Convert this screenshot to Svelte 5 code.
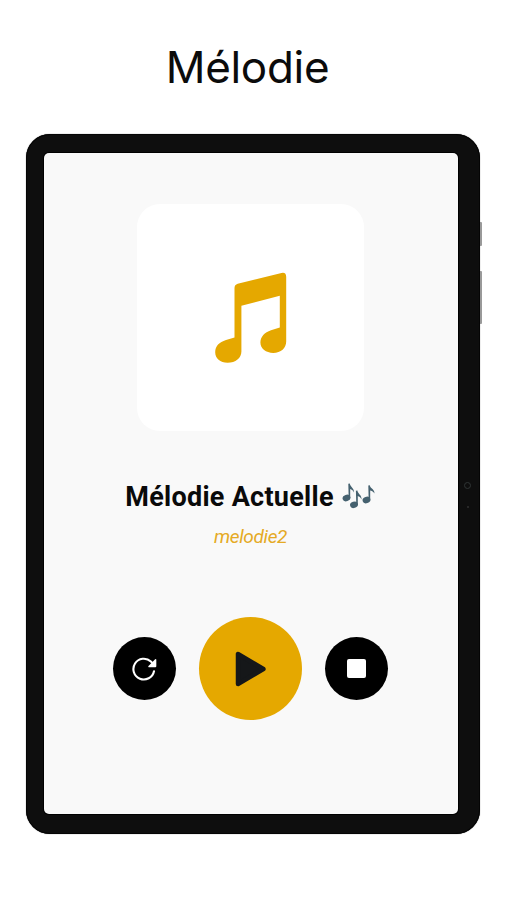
<script lang="ts">
  let track = $state('melodie2');
</script>

<main>
  <h1>Mélodie</h1>

  <div class="tablet">
    <span class="key power"></span>
    <span class="key volume"></span>
    <span class="camera"></span>
    <span class="sensor"></span>

    <section class="screen">
      <div class="cover">
        <svg viewBox="0 0 72 92" width="72" height="92" aria-hidden="true">
          <path
            fill="#e5a800"
            d="M19.5 16Q19.5 12.7 22.7 11.7L66.5.9Q71.2-.2 71.2 5V69.5C71.2 76 66 80.9 58.2 80.9C51 80.9 45.4 76.5 45.4 70.5C45.4 64.5 49.5 60.5 56 58.2L64.8 55.4V23.8L26.4 33.7V79.5C26.4 86 20.6 90.8 12.6 90.8C5.2 90.8.2 86.4.2 80.3C.2 74.2 4.2 70.2 11 68.1L19.5 65.4Z"
          />
        </svg>
      </div>

      <h2>
        <span>Mélodie Actuelle</span>
        <svg viewBox="0 0 34 27" width="34" height="27" aria-hidden="true">
          <g fill="#45616f">
            <ellipse cx="4.5" cy="15" rx="4" ry="3.2" transform="rotate(-18 4.5 15)" />
            <path d="M6.3.8 7.8.4C8.3 4 12.4 4.8 12 9.6 11 7.2 9.4 6.6 8.2 6.1V15H6.7Z" />
            <ellipse cx="12" cy="21.8" rx="4" ry="3.2" transform="rotate(-18 12 21.8)" />
            <path d="M13.9 7.8 15.4 7.4C15.9 11 20 11.8 19.5 16.4 18.6 14.2 17 13.6 15.8 13.1V22H14.3Z" />
            <ellipse cx="24.5" cy="17" rx="4" ry="3.2" transform="rotate(-18 24.5 17)" />
            <path d="M26.3 2.6 27.8 2.2C28.3 5.8 33 6.2 32.4 10.4 31 8.4 29.4 8 28.2 7.6V17H26.7Z" />
          </g>
        </svg>
      </h2>
      <p>{track}</p>

      <div class="controls">
        <button aria-label="Recommencer">
          <svg viewBox="0.7 0 26 26" width="26" height="26">
            <path
              d="M22.7 15.2A10.4 10.4 0 1 1 19.6 5.5L21.4 7.4"
              fill="none"
              stroke="#fff"
              stroke-width="2.1"
              stroke-linecap="round"
            />
            <path d="M25 3.6V10.2Q25 11.2 24 11.2H17.4Q16.5 10.7 17.2 9.9L23.6 3.5Q24.6 2.7 25 3.6Z" fill="#fff" />
          </svg>
        </button>
        <button class="play" aria-label="Lecture">
          <svg viewBox="0 0 32 36" width="32" height="36">
            <path
              d="M3 3V33L28.4 18Z"
              fill="#151719"
              stroke="#151719"
              stroke-width="4.5"
              stroke-linejoin="round"
            />
          </svg>
        </button>
        <button aria-label="Arrêter"><span class="stop"></span></button>
      </div>
    </section>
  </div>
</main>

<style>
  :global(body) {
    background: #fff;
  }

  main {
    box-sizing: border-box;
    height: 900px;
    padding: 40px 26px 0;
    overflow: hidden;
  }

  h1 {
    width: 443px;
    height: 54px;
    margin: 0 0 40px;
    color: #0b0b0b;
    font: 400 44px/54px Inter, sans-serif;
    letter-spacing: -0.3px;
    text-align: center;
  }

  .tablet {
    position: relative;
    box-sizing: border-box;
    width: 454px;
    height: 700px;
    padding: 19px 22px 20px 18px;
    background: #0e0e0e;
    border-radius: 24px;
    box-shadow:
      inset 0 0 0 1px #050505,
      0 0 1px #555;
  }

  .screen {
    box-sizing: border-box;
    display: flex;
    flex-direction: column;
    align-items: center;
    height: 661px;
    padding: 51px 1px 0 0;
    background: #f9f9f9;
    border-radius: 5px;
    box-shadow: 0 0 0 1px #000;
  }

  .cover {
    display: grid;
    place-items: center;
    width: 227px;
    height: 227px;
    background: #fff;
    border-radius: 23px;
  }

  h2 {
    display: flex;
    align-items: center;
    gap: 8px;
    height: 34px;
    margin: 49px 0 0;
    color: #0a0a0a;
    font: 700 27px/34px Roboto, sans-serif;
    letter-spacing: 0.27px;
  }

  h2 svg {
    margin-top: -2px;
  }

  p {
    height: 24px;
    margin: 11px 0 0;
    color: #e5aa24;
    font: italic 400 19px/24px Roboto, sans-serif;
    letter-spacing: -0.35px;
  }

  .controls {
    display: flex;
    align-items: center;
    gap: 23px;
    margin-top: 68px;
  }

  button {
    display: grid;
    place-items: center;
    width: 63px;
    height: 63px;
    padding: 0;
    background: #000;
    border: 0;
    border-radius: 50%;
  }

  .play {
    width: 103px;
    height: 103px;
    background: #e5a800;
  }

  .stop {
    width: 19px;
    height: 19px;
    background: #fff;
    border-radius: 2px;
  }

  .key {
    position: absolute;
    left: 454px;
    width: 2px;
    background: #999;
    border-radius: 0 1px 1px 0;
  }

  .power {
    top: 88px;
    height: 24px;
  }

  .volume {
    top: 137px;
    height: 53px;
  }

  .camera {
    position: absolute;
    top: 348px;
    left: 438px;
    width: 5px;
    height: 5px;
    border: 1px solid #303535;
    border-radius: 50%;
  }

  .sensor {
    position: absolute;
    top: 372px;
    left: 441px;
    width: 2px;
    height: 2px;
    background: #303030;
    border-radius: 50%;
  }
</style>
